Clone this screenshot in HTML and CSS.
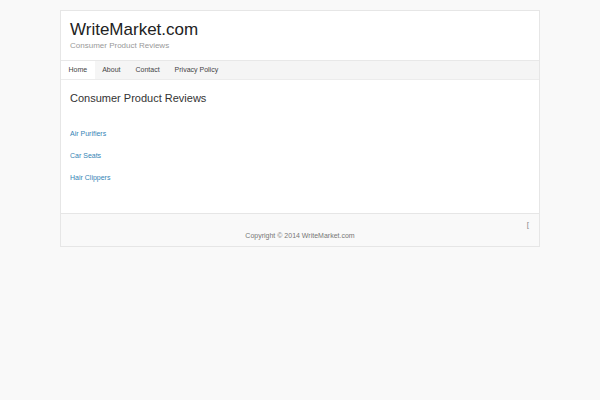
FILE: index.html
```html
<!DOCTYPE html>
<html lang="en">
<head>
    <meta charset="UTF-8">
    <title>WriteMarket.com | Consumer Product Reviews</title>
    <link rel="stylesheet" href="styles.css">
</head>
<body>
    <div class="site">
        <header class="site-header">
            <h1 class="site-title">WriteMarket.com</h1>
            <p class="site-description">Consumer Product Reviews</p>
        </header>
        <nav class="main-nav">
            <a href="#" class="current">Home</a>
            <a href="#">About</a>
            <a href="#">Contact</a>
            <a href="#">Privacy Policy</a>
        </nav>
        <main class="content">
            <h2 class="page-title">Consumer Product Reviews</h2>
            <ul class="review-list">
                <li><a href="#">Air Purifiers</a></li>
                <li><a href="#">Car Seats</a></li>
                <li><a href="#">Hair Clippers</a></li>
            </ul>
        </main>
        <footer class="site-footer">
            <div class="footer-top"><span class="bracket">[</span></div>
            <p class="copyright">Copyright &copy; 2014 WriteMarket.com</p>
        </footer>
    </div>
</body>
</html>
```

FILE: styles.css
```css
body {
    font-family: "Liberation Sans", Arial, sans-serif;
    background-color: #f9f9f9;
    margin: 0;
    padding: 10px 0;
}

.site {
    width: 478px;
    margin: 0 auto;
    border: 1px solid #e6e6e6;
    background-color: white;
}

.site-header {
    padding: 9px 9px;
    height: 31px;
}

.site-title {
    margin: 0;
    font-size: 17px;
    font-weight: normal;
    line-height: 20px;
    color: #222;
}

.site-description {
    margin: 1px 0 0;
    font-size: 8px;
    line-height: 10px;
    color: #999;
}

.main-nav {
    display: flex;
    background-color: #f5f5f5;
    border-top: 1px solid #e8e8e8;
    border-bottom: 1px solid #ececec;
}

.main-nav a {
    font-size: 7px;
    line-height: 18px;
    padding: 0 7.5px;
    color: #444;
    text-decoration: none;
}

.main-nav a.current {
    background-color: white;
}

.content {
    padding: 11px 9px 18px;
}

.page-title {
    margin: 0;
    font-size: 11px;
    font-weight: normal;
    line-height: 14px;
    color: #333;
}

.review-list {
    list-style: none;
    margin: 24px 0 0;
    padding: 0;
}

.review-list li {
    font-size: 7px;
    line-height: 10px;
    margin-bottom: 12px;
}

.review-list a {
    color: #3584b5;
    text-decoration: none;
}

.site-footer {
    background-color: #f9f9f9;
    border-top: 1px solid #e6e6e6;
    height: 32px;
}

.footer-top {
    text-align: right;
    padding: 3px 10px 0 0;
    height: 14px;
    line-height: 10px;
}

.bracket {
    font-size: 8px;
    color: #888;
}

.copyright {
    margin: 0;
    line-height: 10px;
    text-align: center;
    font-size: 7px;
    color: #777;
}
```
